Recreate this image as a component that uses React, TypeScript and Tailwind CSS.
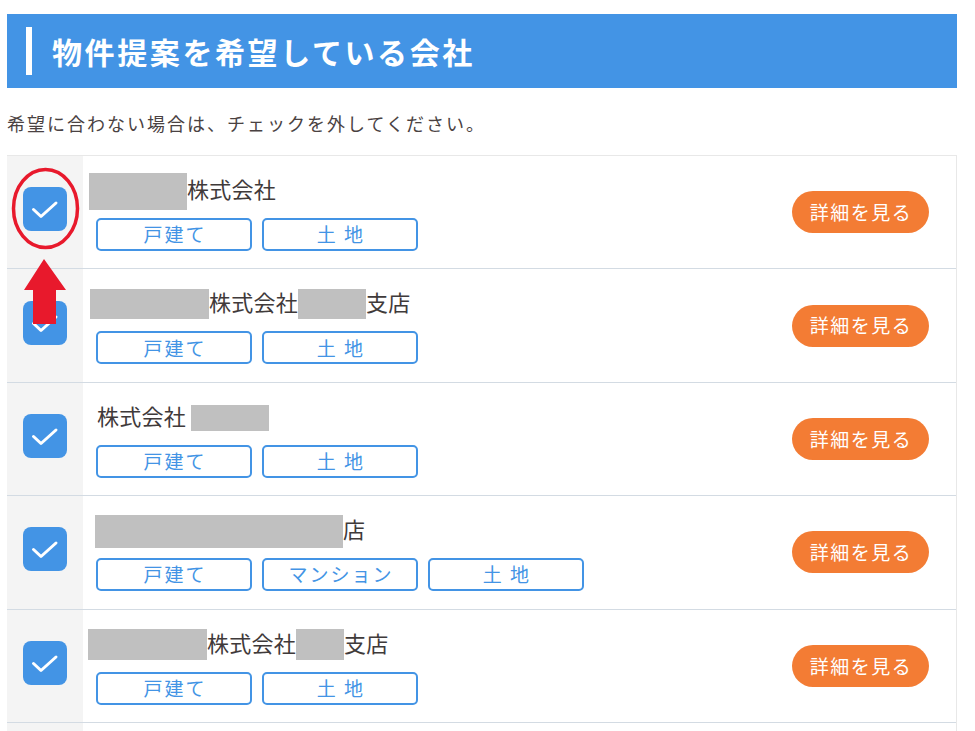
import React from "react";

type Part = { text?: string; mask?: number; maskH?: number };

type Company = {
  offset: number;
  name: Part[];
  tags: string[];
};

const companies: Company[] = [
  { offset: -7, name: [{ mask: 98, maskH: 37 }, { text: "株式会社" }], tags: ["戸建て", "土 地"] },
  {
    offset: -6,
    name: [{ mask: 119, maskH: 30 }, { text: "株式会社" }, { mask: 68, maskH: 30 }, { text: "支店" }],
    tags: ["戸建て", "土 地"],
  },
  { offset: 1, name: [{ text: "株式会社 " }, { mask: 78, maskH: 26 }], tags: ["戸建て", "土 地"] },
  { offset: -1, name: [{ mask: 248, maskH: 33 }, { text: "店" }], tags: ["戸建て", "マンション", "土 地"] },
  {
    offset: -8,
    name: [{ mask: 119, maskH: 31 }, { text: "株式会社" }, { mask: 48, maskH: 31 }, { text: "支店" }],
    tags: ["戸建て", "土 地"],
  },
];

function CheckBox() {
  return (
    <div className="mb-[6px] flex h-[44px] w-[44px] items-center justify-center rounded-[8px] bg-[#4394e5]">
      <svg width="44" height="44" viewBox="0 0 44 44" fill="none">
        <polyline
          points="10.5,22.5 18,29.5 33,16"
          stroke="white"
          strokeWidth="3"
          strokeLinecap="round"
          strokeLinejoin="round"
        />
      </svg>
    </div>
  );
}

function Row({ company }: { company: Company }) {
  return (
    <div className="flex h-[113.4px] shrink-0 border-b border-[#d3dbe3]">
      <div className="flex w-[76px] shrink-0 items-center justify-center bg-[#f4f4f4]">
        <CheckBox />
      </div>
      <div className="flex flex-1 flex-col pl-[13px] pt-[17px]">
        <div
          className="flex h-[36px] items-center text-[22px] leading-[30px] tracking-[0.25px] text-[#3f3a3a]"
          style={{ marginLeft: company.offset }}
        >
          {company.name.map((p, i) =>
            p.mask ? (
              <span
                key={i}
                className="inline-block bg-[#c0c0c0]"
                style={{ width: p.mask, height: p.maskH }}
              />
            ) : (
              <span key={i} className="mb-[6px] whitespace-pre">
                {p.text}
              </span>
            )
          )}
        </div>
        <div className="mt-[9px] flex gap-[10px]">
          {company.tags.map((t) => (
            <span
              key={t}
              className="flex h-[33px] w-[156px] items-center justify-center whitespace-pre rounded-[5px] border-2 border-[#4394e5] pl-[2px] text-[19px] tracking-[2px] text-[#4394e5]"
            >
              {t}
            </span>
          ))}
        </div>
      </div>
      <div className="flex items-center pr-[27px]">
        <button className="flex h-[42px] w-[137px] items-center justify-center rounded-full bg-[#f37c34] pl-[1px] text-[19px] tracking-[1.5px] text-white">
          詳細を見る
        </button>
      </div>
    </div>
  );
}

export default function App() {
  return (
    <div
      className="relative h-[731px] overflow-hidden bg-white"
      style={{ fontFamily: '"Noto Sans CJK JP", "Noto Sans", sans-serif' }}
    >
      <div className="ml-[7px] w-[950px] pt-[14px]">
        <div className="flex h-[74px] items-center bg-[#4394e5] pl-[19px]">
          <span className="h-[48px] w-[6px] bg-white" />
          <h1 className="ml-[20px] text-[30px] font-bold tracking-[2.6px] text-white">
            物件提案を希望している会社
          </h1>
        </div>
        <p className="mt-[22px] text-[18px] tracking-[2px] text-[#4a4242]">
          希望に合わない場合は、チェックを外してください。
        </p>
        <div className="mt-[18px] flex flex-col border-r border-t border-[#e8e8e8]">
          {companies.map((c, i) => (
            <Row key={i} company={c} />
          ))}
          <div className="flex h-[40px]">
            <div className="w-[76px] shrink-0 bg-[#f4f4f4]" />
          </div>
        </div>
      </div>

      <svg
        className="pointer-events-none absolute left-0 top-0"
        width="100"
        height="340"
        viewBox="0 0 100 340"
      >
        <ellipse cx="45.5" cy="208.5" rx="32" ry="39" fill="none" stroke="#e8192c" strokeWidth="3.5" />
        <polygon points="44,259 24,290 33,290 33,324 56,324 56,290 66,290" fill="#e8192c" />
      </svg>
    </div>
  );
}
